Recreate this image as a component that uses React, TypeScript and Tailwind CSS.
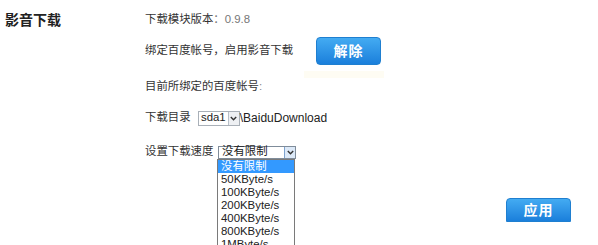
import React from "react";

const font = { fontFamily: '"Liberation Sans", "Noto Sans CJK SC", sans-serif' };

const speeds = [
  "没有限制",
  "50KByte/s",
  "100KByte/s",
  "200KByte/s",
  "400KByte/s",
  "800KByte/s",
  "1MByte/s",
];

function Arrow({ active }: { active?: boolean }) {
  return (
    <span
      className={`flex items-center justify-center w-[11px] h-full border-l ${
        active
          ? "border-[#7da2ce] bg-[#dce9f8]"
          : "border-[#b8bfc8] bg-[#eef0f3]"
      }`}
    >
      <svg width="7" height="5" viewBox="0 0 7 5">
        <path d="M0.8 1 L3.5 3.8 L6.2 1" fill="none" stroke="#333" strokeWidth="1.4" />
      </svg>
    </span>
  );
}

function BlueButton({ label, className }: { label: string; className?: string }) {
  return (
    <button
      className={`flex items-center justify-center w-[65px] bg-gradient-to-b from-[#43abf2] to-[#1a7fdb] border border-[#1f7fd0] text-white font-bold text-[14px] tracking-[1px] ${className}`}
    >
      {label}
    </button>
  );
}

export default function App() {
  return (
    <div
      className="relative w-[598px] h-[245px] overflow-hidden bg-white text-[#333] text-[11.4px]"
      style={font}
    >
      <div className="flex">
        <div className="w-[145px] pl-[5px] pt-[11px]">
          <h2 className="text-[14px] font-bold leading-[18px] text-[#222]">影音下载</h2>
        </div>

        <div className="flex flex-col">
          <div className="mt-[12px] h-[16px] flex items-center">
            下载模块版本<span className="text-[#777]">：0.9.8</span>
          </div>

          <div className="mt-[9px] h-[28px] flex items-center">
            <span className="w-[171px]">绑定百度帐号，启用影音下载</span>
            <BlueButton label="解除" className="h-[28px] rounded-[4px]" />
          </div>

          <div className="mt-[14px] h-[16px] flex items-center">
            目前所绑定的百度帐号<span className="text-[#888]">:</span>
            <span className="ml-[42px] w-[80px] h-[7px] -mt-[26px] bg-[#fefcf3]" />
          </div>

          <div className="mt-[15px] h-[16px] flex items-center">
            <span className="w-[53px]">下载目录</span>
            <span className="flex items-stretch h-[15px] border border-[#a9b0b8] bg-white">
              <span className="flex items-center px-[2px] text-[#222]">sda1</span>
              <Arrow />
            </span>
            <span className="text-[#222] text-[12px]">\BaiduDownload</span>
          </div>

          <div className="relative mt-[18px] h-[16px] flex items-center">
            <span className="w-[73px]">设置下载速度</span>
            <div className="relative">
              <span className="flex items-stretch w-[78px] h-[13px] border border-[#7f8c9a] bg-white">
                <span className="flex-1 flex items-center px-[3px] text-[#222]">没有限制</span>
                <Arrow active />
              </span>
              <ul className="absolute left-[-1px] top-[13px] w-[78px] border border-[#7a7a7a] bg-white">
                {speeds.map((s, i) => (
                  <li
                    key={s}
                    className={`h-[13px] leading-[13px] px-[3px] ${
                      i === 0 ? "bg-[#3399ff] text-white" : "text-[#222]"
                    }`}
                  >
                    {s}
                  </li>
                ))}
              </ul>
            </div>
          </div>
        </div>
      </div>

      <div className="flex justify-end pr-[27px] mt-[38px]">
        <BlueButton label="应用" className="h-[24px] rounded-t-[4px]" />
      </div>
    </div>
  );
}
